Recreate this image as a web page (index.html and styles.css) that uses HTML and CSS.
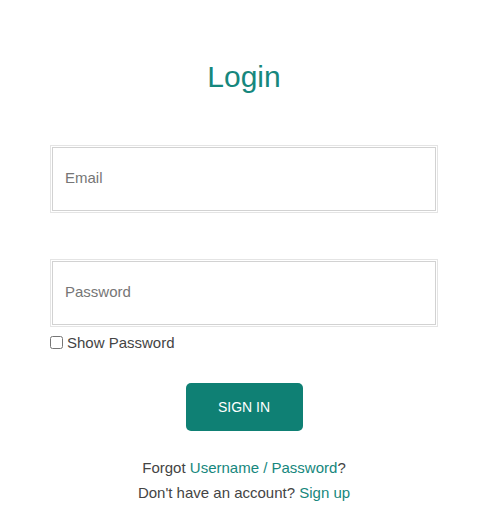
FILE: index.html
```html
<!DOCTYPE html>
<html>
  <head>
    <title>Login</title>
    <link rel="stylesheet" href="styles.css">
  </head>
  <body>
    <div class="login">
      <h1 class="title">Login</h1>
      <form class="form">
        <input class="field" type="email" placeholder="Email" />
        <input class="field field-pass" type="password" placeholder="Password" />
        <label class="show">
          <input type="checkbox" class="check" />
          Show Password
        </label>
        <button type="button" class="signin">SIGN IN</button>
      </form>
      <p class="links">Forgot <a href="#">Username / Password</a>?</p>
      <p class="links links-last">Don't have an account? <a href="#">Sign up</a></p>
    </div>
  </body>
</html>
```

FILE: styles.css
```css
html,
body {
  margin: 0;
  padding: 0;
  background: #ffffff;
  font-family: "Liberation Sans", Arial, sans-serif;
  color: #444444;
}

.login {
  width: 388px;
  margin-left: 50px;
  padding-top: 59px;
}

.title {
  margin: 0;
  text-align: center;
  font-size: 30px;
  font-weight: 400;
  line-height: 36px;
  color: #16877d;
}

.form {
  display: flex;
  flex-direction: column;
  margin-top: 50px;
}

.field {
  box-sizing: border-box;
  width: 388px;
  height: 68px;
  margin: 0;
  padding: 0 14px 4px;
  border: 1px solid #e4e4e4;
  box-shadow: inset 0 0 0 1px #ffffff, inset 0 0 0 2px #d2d2d2;
  outline: none;
  font-family: inherit;
  font-size: 15px;
  color: #444444;
}

.field::placeholder {
  color: #767676;
}

.field-pass {
  margin-top: 46px;
}

.show {
  display: flex;
  align-items: center;
  gap: 4px;
  margin-top: 7px;
  font-size: 15px;
  color: #444444;
}

.check {
  width: 13px;
  height: 13px;
  margin: 0;
}

.signin {
  align-self: center;
  width: 117px;
  height: 48px;
  margin-top: 32px;
  border: none;
  border-radius: 5px;
  background: #0f8074;
  color: #ffffff;
  font-family: inherit;
  font-size: 14px;
  cursor: pointer;
}

.links {
  margin: 27px 0 0;
  text-align: center;
  font-size: 15px;
  line-height: 20px;
}

.links-last {
  margin-top: 5px;
}

.links a {
  color: #16877d;
  text-decoration: none;
}
```
